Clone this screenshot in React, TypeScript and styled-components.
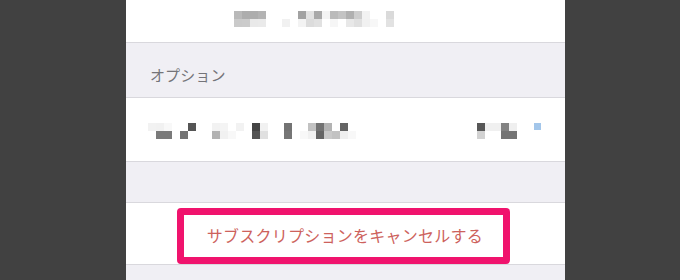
import React from "react";
import styled, { createGlobalStyle } from "styled-components";

const Global = createGlobalStyle`
  html, body { margin: 0; padding: 0; background: #414141; }
  body { font-family: "Noto Sans CJK JP", "Noto Sans", sans-serif; }
  *, *::before, *::after { box-sizing: border-box; }
`;

const Page = styled.div`
  width: 680px;
  height: 280px;
  overflow: hidden;
  padding-left: 126px;
  background: #414141;
`;

const Panel = styled.div`
  width: 439px;
  height: 280px;
  background: #f0eff4;
  display: flex;
  flex-direction: column;
`;

const Row = styled.div<{ $h: number; $gray?: boolean }>`
  height: ${(p) => p.$h}px;
  flex: none;
  background: ${(p) => (p.$gray ? "#f0eff4" : "#ffffff")};
  border-bottom: 1px solid #d9d8dd;
  display: flex;
  align-items: center;
`;

const TopRow = styled(Row)`
  padding-left: 108px;
  padding-bottom: 4px;
`;

const HeaderRow = styled(Row)`
  align-items: flex-end;
  padding: 0 0 12px 24px;
`;

const HeaderText = styled.span`
  font-size: 15px;
  line-height: 20px;
  color: #747479;
  letter-spacing: 0.1px;
`;

const OptionRow = styled(Row)`
  padding: 0 24px 0 22px;
  justify-content: space-between;
`;

const ButtonRow = styled(Row)`
  justify-content: center;
  align-items: flex-end;
  padding-right: 4px;
`;

const Highlight = styled.div`
  border: 7px solid #f0136d;
  border-radius: 4px;
  background: #ffffff;
  padding: 8px 20px 10px 23px;
  display: flex;
  align-items: center;
`;

const CancelText = styled.span`
  font-size: 16px;
  line-height: 24px;
  letter-spacing: 0.25px;
  color: #cd625c;
  white-space: nowrap;
`;

type Cell = [number, number, string];

const Mosaic: React.FC<{ cells: Cell[]; cols: number; size?: number }> = ({
  cells,
  cols,
  size = 8,
}) => (
  <svg width={cols * size} height={2 * size} style={{ display: "block" }}>
    {cells.map(([c, r, fill], i) => (
      <rect key={i} x={c * size} y={r * size} width={size} height={size} fill={fill} />
    ))}
  </svg>
);

const topCells: Cell[] = [
  [0, 0, "#b9b9b9"], [1, 0, "#adadad"], [2, 0, "#adadad"], [3, 0, "#b3b3b3"],
  [8, 0, "#a2a2a2"], [9, 0, "#e2e2e2"], [10, 0, "#a9a9a9"], [11, 0, "#f4f4f4"],
  [12, 0, "#bababa"], [13, 0, "#c3c3c3"], [14, 0, "#b0b0b0"], [15, 0, "#cdcdcd"],
  [16, 0, "#f2f2f2"], [19, 0, "#dadada"],
  [0, 1, "#cacaca"], [1, 1, "#cbcbcb"], [2, 1, "#e9e9e9"], [3, 1, "#eaeaea"],
  [6, 1, "#f1f1f1"], [8, 1, "#f3f3f3"], [9, 1, "#dcdcdc"], [10, 1, "#e1e1e1"],
  [12, 1, "#f6f6f6"], [14, 1, "#e8e8e8"], [15, 1, "#e0e0e0"], [16, 1, "#f1f1f1"],
  [17, 1, "#f7f7f7"], [19, 1, "#e2e2e2"],
];

const leftCells: Cell[] = [
  [0, 0, "#f2f2f2"], [1, 0, "#f1f1f1"], [2, 0, "#f8f8f8"], [5, 0, "#555555"],
  [8, 0, "#f2f2f2"], [9, 0, "#f4f4f4"], [11, 0, "#f2f2f2"], [13, 0, "#444444"],
  [14, 0, "#f1f1f1"], [17, 0, "#737373"], [20, 0, "#c2c2c2"], [21, 0, "#727272"],
  [22, 0, "#b3b3b3"], [24, 0, "#646464"],
  [1, 1, "#7a7a7a"], [2, 1, "#7a7a7a"], [4, 1, "#747474"], [8, 1, "#b2b2b2"],
  [9, 1, "#f1f1f1"], [10, 1, "#f8f8f8"], [13, 1, "#545454"], [14, 1, "#e0e0e0"],
  [17, 1, "#767676"], [19, 1, "#f8f8f8"], [20, 1, "#f1f1f1"], [21, 1, "#656565"],
  [22, 1, "#c9c9c9"], [23, 1, "#c2c2c2"], [24, 1, "#efefef"], [25, 1, "#f8f8f8"],
];

const rightCells: Cell[] = [
  [0, 0, "#575757"], [1, 0, "#f0f0f0"], [2, 0, "#f0f0f0"], [3, 0, "#828282"], [4, 0, "#efefef"],
  [0, 1, "#d2d2d2"], [3, 1, "#747474"], [4, 1, "#747474"],
];

const RightGroup = styled.div`
  display: flex;
  align-items: center;
  gap: 17px;
`;

const Dot = styled.div`
  width: 7px;
  height: 7px;
  background: #a3c6ea;
  margin-top: -7px;
`;

const MosaicWrap = styled.div`
  margin-top: 3px;
`;

export default function App() {
  return (
    <>
      <Global />
      <Page>
        <Panel>
          <TopRow $h={43}>
            <Mosaic cells={topCells} cols={20} />
          </TopRow>
          <HeaderRow $h={55} $gray>
            <HeaderText>オプション</HeaderText>
          </HeaderRow>
          <OptionRow $h={64}>
            <MosaicWrap>
              <Mosaic cells={leftCells} cols={26} />
            </MosaicWrap>
            <RightGroup>
              <MosaicWrap>
                <Mosaic cells={rightCells} cols={5} />
              </MosaicWrap>
              <Dot />
            </RightGroup>
          </OptionRow>
          <Row $h={41} $gray />
          <ButtonRow $h={62}>
            <Highlight>
              <CancelText>サブスクリプションをキャンセルする</CancelText>
            </Highlight>
          </ButtonRow>
        </Panel>
      </Page>
    </>
  );
}
